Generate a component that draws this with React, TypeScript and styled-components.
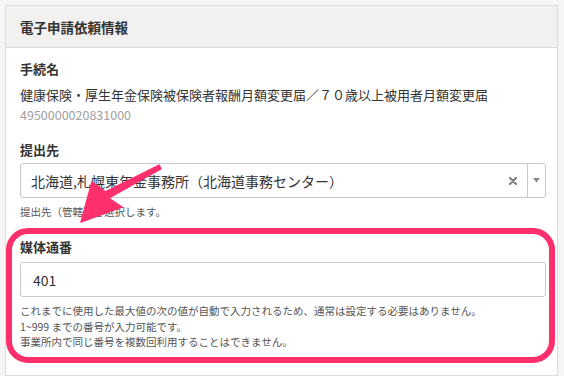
import React from 'react';
import styled, { createGlobalStyle } from 'styled-components';

const GlobalStyle = createGlobalStyle`
  html, body {
    margin: 0;
    padding: 0;
    background: #f5f5f5;
    font-family: "Noto Sans CJK JP", "Noto Sans", sans-serif;
    color: #333;
  }
`;

const Page = styled.div`
  width: 564px;
  height: 376px;
  padding: 5px 6px 0 5px;
  box-sizing: border-box;
  overflow: hidden;
  position: relative;
`;

const Card = styled.div`
  background: #fff;
  border: 1px solid #dcdcdc;
  height: 371px;
  box-sizing: border-box;
`;

const CardHeader = styled.div`
  height: 41px;
  display: flex;
  align-items: center;
  padding: 0 14px;
  background: #f2f1f0;
  border-bottom: 1px solid #dcdcdc;
  font-size: 13.5px;
  font-weight: 700;
  color: #333;
`;

const CardBody = styled.div`
  padding: 11px 11px 0 14px;
`;

const Label = styled.div<{ $gap?: number }>`
  font-size: 13px;
  line-height: 20px;
  font-weight: 700;
  color: #333;
  margin-top: ${(p) => p.$gap ?? 0}px;
`;

const Value = styled.div`
  margin-top: 6px;
  font-size: 13px;
  line-height: 20px;
  color: #333;
`;

const Code = styled.div`
  margin-top: 2px;
  font-size: 12.5px;
  line-height: 16px;
  color: #a0a0a0;
`;

const SelectBox = styled.div`
  margin-top: 3px;
  height: 35px;
  box-sizing: border-box;
  border: 1px solid #c8c8c8;
  border-radius: 3px;
  display: flex;
  align-items: stretch;
  background: #fff;
`;

const SelectText = styled.div`
  flex: 1;
  display: flex;
  align-items: center;
  padding-left: 10px;
  font-size: 14px;
  color: #333;
`;

const ClearMark = styled.div`
  display: flex;
  align-items: center;
  padding-right: 10px;
`;

const Caret = styled.div`
  width: 17px;
  border-left: 1px solid #c8c8c8;
  display: flex;
  align-items: center;
  justify-content: center;
`;

const Help = styled.div<{ $gap?: number }>`
  margin-top: ${(p) => p.$gap ?? 0}px;
  font-size: 10.5px;
  line-height: 14px;
  color: #555;
`;

const Highlight = styled.div`
  margin: 9px -9px 0 -14px;
  border: 6px solid #fd2f6c;
  border-radius: 22px;
  padding: 3px 3px 7px 8px;
`;

const TextInput = styled.div`
  margin-top: 5px;
  height: 35px;
  box-sizing: border-box;
  border: 1px solid #c8c8c8;
  border-radius: 3px;
  display: flex;
  align-items: center;
  padding-left: 12px;
  font-size: 14px;
  color: #333;
`;

const HelpLines = styled.div`
  margin-top: 6px;
  font-size: 10.5px;
  line-height: 15.5px;
  color: #555;
`;

const ArrowOverlay = styled.svg`
  position: absolute;
  left: 0;
  top: 0;
  pointer-events: none;
`;

export default function App() {
  return (
    <>
      <GlobalStyle />
      <Page>
        <Card>
          <CardHeader>電子申請依頼情報</CardHeader>
          <CardBody>
            <Label>手続名</Label>
            <Value>健康保険・厚生年金保険被保険者報酬月額変更届／７０歳以上被用者月額変更届</Value>
            <Code>4950000020831000</Code>

            <Label $gap={17}>提出先</Label>
            <SelectBox>
              <SelectText>北海道,札幌東年金事務所（北海道事務センター）</SelectText>
              <ClearMark>
                <svg width="8" height="8" viewBox="0 0 8 8">
                  <path d="M1 1 L7 7 M7 1 L1 7" stroke="#7a7a7a" strokeWidth="2" strokeLinecap="round" />
                </svg>
              </ClearMark>
              <Caret>
                <svg width="7" height="5" viewBox="0 0 7 5">
                  <path d="M0 0 L7 0 L3.5 4.5 Z" fill="#888" />
                </svg>
              </Caret>
            </SelectBox>
            <Help $gap={7}>提出先（管轄）を選択します。</Help>

            <Highlight>
              <Label>媒体通番</Label>
              <TextInput>401</TextInput>
              <HelpLines>
                <div>これまでに使用した最大値の次の値が自動で入力されるため、通常は設定する必要はありません。</div>
                <div>1~999 までの番号が入力可能です。</div>
                <div>事業所内で同じ番号を複数回利用することはできません。</div>
              </HelpLines>
            </Highlight>
          </CardBody>
        </Card>
        <ArrowOverlay width="564" height="376" viewBox="0 0 564 376">
          <polygon
            points="81,222 92,182 105.4,191.9 159.1,165.2 160.9,168.8 108.6,198.1 122,207"
            fill="#fd2f6c"
            stroke="#fd2f6c"
            strokeWidth="1.5"
            strokeLinejoin="round"
          />
        </ArrowOverlay>
      </Page>
    </>
  );
}
